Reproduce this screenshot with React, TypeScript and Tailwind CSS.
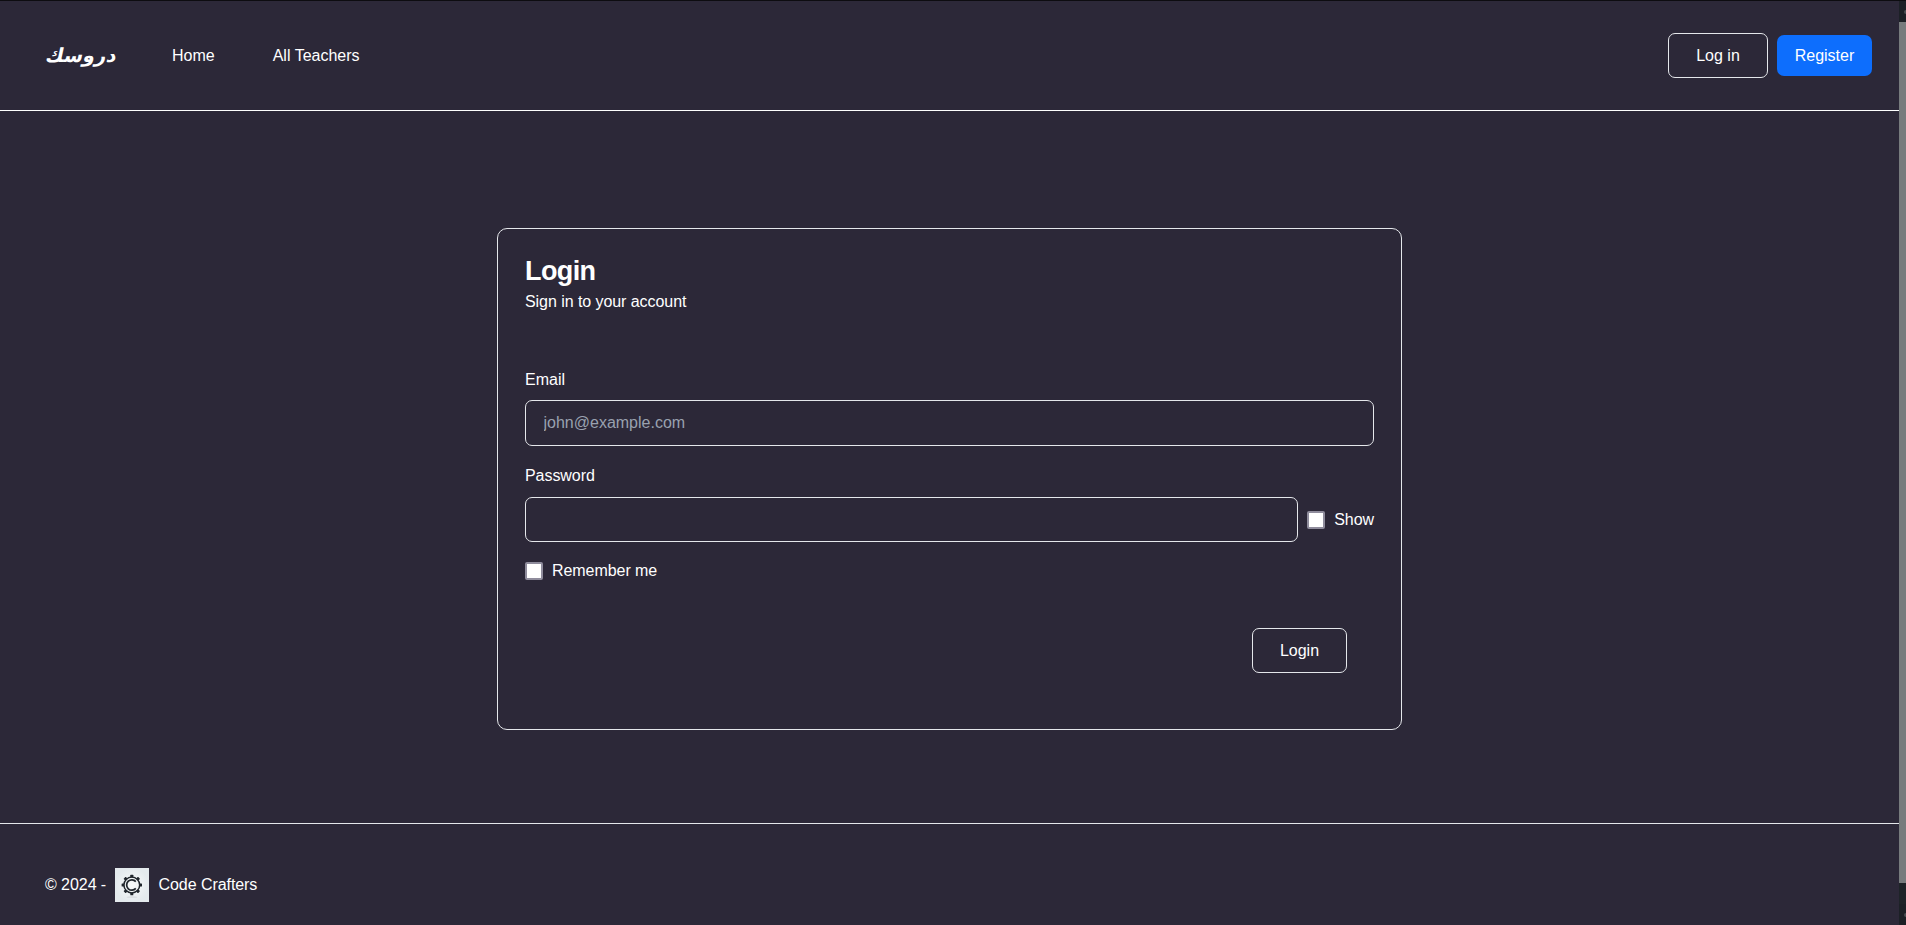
import React from "react";

function GearLogo() {
  const teeth = [0, 45, 90, 135, 180, 225, 270, 315];
  return (
    <svg viewBox="0 0 34 34" className="block size-[34px] shrink-0" aria-hidden="true">
      <defs>
        <radialGradient id="tile">
          <stop offset="0" stopColor="#f8fafa" />
          <stop offset="1" stopColor="#e4eaed" />
        </radialGradient>
      </defs>
      <rect width="34" height="34" fill="url(#tile)" />
      <ellipse cx="17" cy="29" rx="5.5" ry="0.6" fill="#cdd2d5" />
      <g transform="translate(16.8 17)">
        {teeth.map((angle) => (
          <rect key={angle} x="-1.5" y="-10.2" width="3" height="2.6" rx="0.5" fill="#20262c" transform={`rotate(${angle})`} />
        ))}
        <circle r="7.9" fill="none" stroke="#20262c" strokeWidth="1.5" />
        <path d="M4 -3.4A5.2 5.2 0 1 0 4 3.4" fill="none" stroke="#20262c" strokeWidth="1.7" />
      </g>
    </svg>
  );
}

function Checkbox({ label }: { label: string }) {
  return (
    <label className="flex items-center">
      <input
        type="checkbox"
        className="size-[18px] shrink-0 appearance-none rounded-[2px] border-2 border-[#8f8c9c] bg-white"
      />
      <span className="ml-[9px] tracking-[-0.06px] whitespace-nowrap">{label}</span>
    </label>
  );
}

export default function App() {
  return (
    <div className="flex h-[925px] w-full overflow-hidden border-t border-[#0d0c10] bg-[#2c2838] font-['Liberation_Sans',Arial,sans-serif] text-base leading-6 text-white">
      <div className="flex min-w-0 flex-1 flex-col">
        <header className="flex h-[110px] shrink-0 items-center border-b border-white pr-[27px] pl-[45px]">
          <a className="w-[127px] pt-px pl-px font-['DejaVu_Sans',sans-serif] text-[19.5px] font-bold" lang="ar">
            <span className="inline-block -skew-x-12">دروسك</span>
          </a>
          <nav className="flex flex-1 gap-[58px]">
            <a>Home</a>
            <a>All Teachers</a>
          </nav>
          <div className="flex items-center gap-[9px]">
            <button className="h-[45px] w-[100px] rounded-[7px] border border-gray-200">Log in</button>
            <button className="h-[41px] w-[95px] rounded-[7px] bg-[#0d6efd]">Register</button>
          </div>
        </header>

        <main className="flex h-[712px] shrink-0 justify-center pt-[117px]">
          <form className="flex h-[502px] w-[905px] flex-col rounded-[10px] border border-gray-200 px-[27px] pt-[26px]">
            <h1 className="text-[27px] leading-[32px] font-bold tracking-[-0.6px]">Login</h1>
            <p className="mt-px leading-[27px] tracking-[-0.06px]">Sign in to your account</p>
            <label className="mt-[51px] leading-[27px]">Email</label>
            <input
              type="email"
              placeholder="john@example.com"
              className="mt-[7px] h-[46px] w-full rounded-[7px] border border-gray-200 px-[17.5px] placeholder:text-gray-400"
            />
            <label className="mt-4 leading-[27px] tracking-[-0.06px]">Password</label>
            <div className="mt-2 flex items-center gap-[9px]">
              <input type="password" className="h-[45px] min-w-0 flex-1 rounded-[7px] border border-gray-200 px-[17px]" />
              <Checkbox label="Show" />
            </div>
            <div className="mt-[17px]">
              <Checkbox label="Remember me" />
            </div>
            <button type="button" className="mt-[45px] mr-[27px] h-[45px] w-[95px] self-end rounded-[7px] border border-gray-200">
              Login
            </button>
          </form>
        </main>

        <footer className="flex flex-1 items-start border-t border-gray-200 pt-[44px] pl-[45px]">
          <div className="flex items-center">
            <span className="w-[70px] tracking-[-0.06px]">© 2024 -</span>
            <GearLogo />
            <span className="ml-[9.5px] tracking-[-0.06px]">Code Crafters</span>
          </div>
        </footer>
      </div>

      <div className="flex w-[7px] shrink-0 flex-col bg-[#1c2026]">
        <div className="flex h-[21px] items-center justify-end">
          <span className="h-[4px] w-[2px] rounded-l bg-[#4a4e53]" />
        </div>
        <div className="h-[861px] bg-[#777b7d]" />
        <div className="h-[21px] bg-[#1e2328]" />
        <div className="flex flex-1 items-center justify-end">
          <span className="h-[4px] w-[2px] rounded-l bg-[#4a4e53]" />
        </div>
      </div>
    </div>
  );
}
